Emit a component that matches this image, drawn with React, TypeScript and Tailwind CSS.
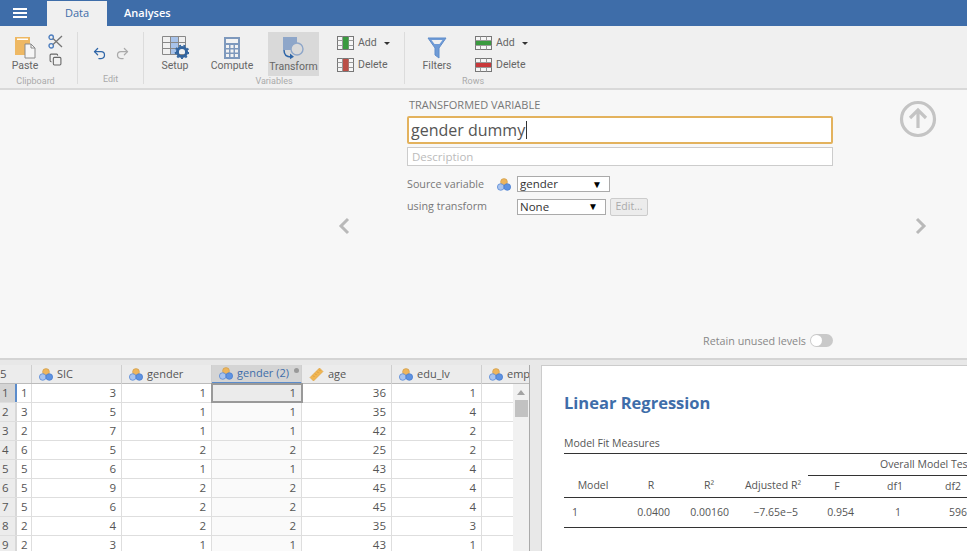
import { Undo2, Redo2, Copy } from 'lucide-react';

const rows = [
  [1, 3, 1, 1, 36, 1],
  [3, 5, 1, 1, 35, 4],
  [2, 7, 1, 1, 42, 2],
  [6, 5, 2, 2, 25, 2],
  [5, 6, 1, 1, 43, 4],
  [5, 9, 2, 2, 45, 4],
  [5, 6, 2, 2, 45, 4],
  [2, 4, 2, 2, 35, 3],
  [2, 3, 1, 1, 43, 1],
];

function VarIcon() {
  return (
    <svg width="14" height="13" viewBox="0 0 14 13" className="shrink-0">
      <circle cx="7" cy="4" r="3.4" fill="#eeb55c" stroke="#c99a4a" strokeWidth="0.6" />
      <circle cx="3.7" cy="9" r="3.3" fill="#a9c4ee" stroke="#5b8ad6" strokeWidth="0.8" />
      <circle cx="10.3" cy="9" r="3.3" fill="#5f93e2" stroke="#4a7fd0" strokeWidth="0.8" />
    </svg>
  );
}

function RulerIcon() {
  return (
    <svg width="15" height="15" viewBox="0 0 15 15" className="shrink-0">
      <path d="M1 10.5 10.5 1 14 4.5 4.5 14Z" fill="#f0b552" stroke="#dc9f3c" strokeWidth="0.6" />
      <path d="M4 8.5l1.5 1.5M6 6.5l1.5 1.5M8 4.5l1.5 1.5M10 2.5l1.5 1.5" stroke="#cf9433" strokeWidth="0.7" />
    </svg>
  );
}

function PasteIcon() {
  return (
    <svg width="23" height="23" viewBox="0 0 23 23">
      <rect x="1" y="1" width="15" height="18" fill="#eeb863" />
      <rect x="3" y="2.5" width="11" height="1.5" fill="#fff" />
      <path d="M11 8h6l4 4v10H11Z" fill="#f6f6f6" stroke="#8a8a8a" strokeWidth="1" />
      <path d="M17 8v4h4" fill="none" stroke="#8a8a8a" strokeWidth="1" />
    </svg>
  );
}

function ScissorsIcon() {
  return (
    <svg width="15" height="15" viewBox="0 0 15 15">
      <circle cx="3.2" cy="3.2" r="2.2" fill="none" stroke="#4f7fbf" strokeWidth="1.4" />
      <circle cx="3.2" cy="11.8" r="2.2" fill="none" stroke="#4f7fbf" strokeWidth="1.4" />
      <path d="M5 4.5 14 13M5 10.5 14 2" stroke="#777" strokeWidth="1.3" />
    </svg>
  );
}

function SetupIcon() {
  return (
    <svg width="27" height="23" viewBox="0 0 27 23">
      <rect x="8.5" y="1" width="8" height="18" fill="#a8c3ea" />
      <path d="M.5.5h23v18H.5ZM.5 6.5h23M.5 12.5h23M8.5.5v18M16.5.5v18" fill="none" stroke="#888" strokeWidth="1" />
      <circle cx="20" cy="16" r="4.6" fill="none" stroke="#33659f" strokeWidth="3" />
      <circle cx="20" cy="16" r="6.4" fill="none" stroke="#33659f" strokeWidth="1.8" strokeDasharray="2 2.4" />
    </svg>
  );
}

function ComputeIcon() {
  return (
    <svg width="16" height="22" viewBox="0 0 16 22">
      <rect width="16" height="22" fill="#7e99bd" />
      <rect x="2" y="2" width="12" height="4" fill="#f3f3f3" />
      <path d="M2 8h3v3H2ZM6.5 8h3v3h-3ZM11 8h3v3h-3ZM2 12.5h3v3H2ZM6.5 12.5h3v3h-3ZM11 12.5h3v3h-3ZM2 17h3v3H2ZM6.5 17h3v3h-3ZM11 17h3v3h-3Z" fill="#f3f3f3" />
    </svg>
  );
}

function TransformIcon() {
  return (
    <svg width="24" height="24" viewBox="0 0 24 24">
      <rect x="1" y="1" width="14" height="13" fill="#8ea6c9" />
      <circle cx="15" cy="13" r="6" fill="#d9d9d9" stroke="#8ea6c9" strokeWidth="1.4" />
      <path d="M2 14c0 5 3 7 7 7" fill="none" stroke="#2f66a8" strokeWidth="1.5" />
      <path d="M8 17.5l4 3.2-4 2.6Z" fill="#2f66a8" />
    </svg>
  );
}

function GridIcon({ color, kind }: { color: string; kind: 'col' | 'row' }) {
  return (
    <svg width="17" height="14" viewBox="0 0 17 14" className="shrink-0">
      <rect x="0.5" y="0.5" width="16" height="13" fill="#f6f6f6" stroke="#777" />
      <path d="M.5 4.5h16M.5 9.5h16M5.5.5v13M11.5.5v13" stroke="#999" strokeWidth="1" />
      {kind === 'col' ? <rect x="6" y="1" width="5.5" height="12" fill={color} /> : <rect x="1" y="5" width="15" height="4" fill={color} />}
    </svg>
  );
}

function FilterIcon() {
  return (
    <svg width="20" height="22" viewBox="0 0 20 22">
      <path d="M1 1h18l-7 10v10l-4-3v-7Z" fill="#6f9bd6" stroke="#5f8dcb" strokeWidth="1" />
      <path d="M4.5 3h11l-3 4h-5Z" fill="#f0f0f0" />
    </svg>
  );
}

function BigButton({ label, icon, active }: { label: string; icon: React.ReactNode; active?: boolean }) {
  return (
    <div className={`flex h-[44px] flex-col items-center justify-between pt-1 pb-[4px] ${active ? 'bg-[#d9d9d9]' : ''}`}>
      <div className="flex h-[24px] items-center justify-center">{icon}</div>
      <span className="text-[10.5px] leading-[13px] text-[#666]">{label}</span>
    </div>
  );
}

function SmallPair({ kind }: { kind: 'col' | 'row' }) {
  return (
    <div className="flex flex-col gap-[8px] pt-[4px] text-[10.5px] leading-[14px] text-[#666]">
      <div className="flex items-center gap-[4px]">
        <GridIcon color="#3a9a3f" kind={kind} />
        <span>Add</span>
        <span className="ml-[3px] border-x-[3px] border-t-[3px] border-x-transparent border-t-[#333]" />
      </div>
      <div className="flex items-center gap-[4px]">
        <GridIcon color={kind === 'col' ? '#bb4f47' : '#c8383a'} kind={kind} />
        <span>Delete</span>
      </div>
    </div>
  );
}

function GroupLabel({ children, className = '' }: { children: React.ReactNode; className?: string }) {
  return <div className={`text-center text-[9px] leading-[10px] text-[#aaa] ${className}`}>{children}</div>;
}

function Ribbon() {
  return (
    <div className="flex h-[64px] shrink-0 border-b-2 border-[#d9d9d9] bg-[#f0f0f0] pt-[6px] font-['Roboto',sans-serif]">
      <div className="flex h-[52px] w-[78px] flex-col justify-between border-r border-[#dcdcdc]">
        <div className="flex">
          <div className="ml-[8px] w-[34px]">
            <BigButton label="Paste" icon={<PasteIcon />} />
          </div>
          <div className="ml-[6px] flex flex-col gap-[4px] pt-[2px]">
            <ScissorsIcon />
            <Copy size={13} color="#666" className="ml-px" />
          </div>
        </div>
        <GroupLabel className="pr-[6px]">Clipboard</GroupLabel>
      </div>

      <div className="flex h-[52px] w-[66px] flex-col justify-between border-r border-[#dcdcdc]">
        <div className="flex justify-center gap-[8px] pt-[14px]">
          <Undo2 size={15} color="#2f66a8" />
          <Redo2 size={15} color="#aaa" />
        </div>
        <GroupLabel>Edit</GroupLabel>
      </div>

      <div className="flex h-[52px] w-[261px] flex-col justify-between border-r border-[#dcdcdc]">
        <div className="flex">
          <div className="ml-[8px] w-[46px]">
            <BigButton label="Setup" icon={<SetupIcon />} />
          </div>
          <div className="ml-[6px] w-[56px]">
            <BigButton label="Compute" icon={<ComputeIcon />} />
          </div>
          <div className="ml-[8px] w-[51px]">
            <BigButton label="Transform" icon={<TransformIcon />} active />
          </div>
          <div className="ml-[18px]">
            <SmallPair kind="col" />
          </div>
        </div>
        <GroupLabel>Variables</GroupLabel>
      </div>

      <div className="flex h-[52px] w-[136px] flex-col justify-between">
        <div className="flex">
          <div className="ml-[12px] w-[40px]">
            <BigButton label="Filters" icon={<FilterIcon />} />
          </div>
          <div className="ml-[18px]">
            <SmallPair kind="row" />
          </div>
        </div>
        <GroupLabel>Rows</GroupLabel>
      </div>
    </div>
  );
}

function Chevron({ dir }: { dir: 'left' | 'right' }) {
  return (
    <svg width="12" height="18" viewBox="0 0 12 18">
      <path d={dir === 'left' ? 'M10 2 3 9l7 7' : 'M2 2l7 7-7 7'} fill="none" stroke="#b9b9b9" strokeWidth="3" />
    </svg>
  );
}

function SelectBox({ value, width }: { value: string; width: string }) {
  return (
    <div className={`flex h-[16px] items-center justify-between border border-[#aaa] bg-white pl-[2px] pr-[7px] text-[11.5px] text-[#333] ${width}`}>
      <span>{value}</span>
      <span className="text-[10px] text-black">▼</span>
    </div>
  );
}

function TransformEditor() {
  return (
    <div className="grid h-[270px] shrink-0 grid-cols-[407px_426px_1fr] border-b-2 border-[#d4d4d4] bg-[#f7f7f7]">
      <div className="flex items-start justify-end pr-[57px] pt-[127px]">
        <Chevron dir="left" />
      </div>

      <div className="flex flex-col pt-[8px]">
        <div className="pl-[2px] text-[11px] leading-[14px] text-[#777]">TRANSFORMED VARIABLE</div>
        <div className="mt-[4px] flex h-[28px] items-center rounded-[2px] border-2 border-[#e3b25d] bg-white pl-[2px] text-[16px] text-[#555]">
          gender dummy
          <span className="ml-px h-[18px] w-px bg-[#333]" />
        </div>
        <div className="mt-[3px] flex h-[19px] items-center border border-[#ccc] bg-white pl-[4px] text-[11.5px] text-[#bbb]">Description</div>
        <div className="mt-[10px] flex h-[16px] items-center text-[10.75px] text-[#777]">
          <span className="w-[90px]">Source variable</span>
          <VarIcon />
          <span className="w-[6px]" />
          <SelectBox value="gender" width="w-[93px]" />
        </div>
        <div className="mt-[6px] flex h-[17px] items-center text-[10.75px] text-[#777]">
          <span className="w-[110px]">using transform</span>
          <SelectBox value="None" width="w-[89px]" />
          <div className="ml-[4px] flex h-[18px] w-[38px] items-center justify-center rounded-[2px] border border-[#ccc] bg-[#ececec] text-[10.5px] text-[#aaa]">Edit...</div>
        </div>
        <div className="mt-auto mb-[9px] flex items-center justify-end gap-[4px] text-[10.75px] text-[#888]">
          <span>Retain unused levels</span>
          <div className="flex h-[13px] w-[23px] items-center rounded-full bg-[#c9c9c9] pl-px">
            <div className="h-[11px] w-[11px] rounded-full bg-white" />
          </div>
        </div>
      </div>

      <div className="flex flex-col pl-[66px] pt-[10px]">
        <svg width="38" height="38" viewBox="0 0 38 38">
          <circle cx="19" cy="19" r="16.5" fill="none" stroke="#c4c4c4" strokeWidth="3.2" />
          <path d="M19 28V10M11 18l8-8 8 8" fill="none" stroke="#c4c4c4" strokeWidth="3.2" />
        </svg>
        <div className="ml-[16px] mt-[79px]">
          <Chevron dir="right" />
        </div>
      </div>
    </div>
  );
}

function HeaderCell({ label, active, ruler, width = 'w-[90px]' }: { label: string; active?: boolean; ruler?: boolean; width?: string }) {
  return (
    <div className={`flex h-[19px] shrink-0 items-center gap-[4px] border-r border-[#cfcfcf] pl-[7px] text-[11px] ${width} ${active ? 'border-b-2 border-b-[#5b8ccb] bg-[#d4d4d4] text-[#3e6da9]' : 'text-[#555]'}`}>
      {ruler ? <RulerIcon /> : <VarIcon />}
      <span className="whitespace-nowrap">{label}</span>
      {active && <span className="mb-[7px] ml-[1px] h-[5px] w-[5px] rounded-full bg-[#999]" />}
    </div>
  );
}

function DataGrid() {
  return (
    <div className="flex w-[530px] shrink-0 flex-col overflow-hidden border-r border-[#aaa] bg-white">
      <div className="flex h-[19px] shrink-0 border-b border-[#bbb] bg-[#ececec]">
        <div className="w-[32px] shrink-0 border-r border-[#cfcfcf] text-[11.5px] leading-[18px] text-[#555]">5</div>
        <HeaderCell label="SIC" />
        <HeaderCell label="gender" />
        <HeaderCell label="gender (2)" active />
        <HeaderCell label="age" ruler />
        <HeaderCell label="edu_lv" />
        <HeaderCell label="emp" width="w-[47px] border-r-0" />
      </div>
      <div className="flex min-h-0 flex-1">
        <div className="w-[513px] shrink-0">
          {rows.map((r, i) => (
            <div key={i} className="flex h-[19px] border-b border-[#dedede] text-[11.5px] leading-[18px] text-[#555]">
              <div className={`w-[17px] shrink-0 border-r-2 pl-[2px] ${i === 0 ? 'border-r-[#5b8ccb] bg-[#d4d4d4]' : 'border-r-[#d8d8d8] bg-[#ececec]'}`}>{i + 1}</div>
              <div className="w-[15px] shrink-0 border-r border-[#dedede] pl-[4px]">{r[0]}</div>
              {r.slice(1).map((v, j) => (
                <div
                  key={j}
                  className={`w-[90px] shrink-0 border-r border-[#dedede] pr-[5px] text-right ${j === 2 ? (i === 0 ? 'bg-[#ebebeb] outline-2 -outline-offset-1 outline-[#999]' : 'bg-[#fafafa]') : ''}`}
                >
                  {v}
                </div>
              ))}
              <div className="flex-1" />
            </div>
          ))}
        </div>
        <div className="flex w-[16px] shrink-0 flex-col items-center bg-[#f1f1f1] pt-[6px]">
          <span className="border-x-[4px] border-b-[5px] border-x-transparent border-b-[#a3a3a3]" />
          <div className="mt-[5px] h-[17px] w-[13px] bg-[#c2c2c2]" />
        </div>
      </div>
    </div>
  );
}

function Results() {
  return (
    <div className="ml-[11px] min-w-0 flex-1 overflow-hidden border-l border-t border-[#ccc] bg-white pl-[22px] pt-[25px] text-[10.5px] text-[#555]">
      <div className="text-[16.5px] font-bold leading-[24px] text-[#3e6da9]">Linear Regression</div>
      <div className="mt-[21px] leading-[14px]">Model Fit Measures</div>
      <div className="mt-[3px] w-[430px] border-y border-[#333]">
        <div className="flex h-[21px] items-center pl-[316px]">
          <div className="whitespace-nowrap">Overall Model Test</div>
        </div>
        <div className="grid h-[23px] grid-cols-[58px_58px_58px_70px_58px_58px_70px] items-center border-b border-[#333] text-center">
          <span>Model</span>
          <span>R</span>
          <span>R²</span>
          <span className="whitespace-nowrap">Adjusted R²</span>
          <span className="self-stretch border-t border-[#333] leading-[20px]">F</span>
          <span className="self-stretch border-t border-[#333] leading-[20px]">df1</span>
          <span className="self-stretch border-t border-[#333] pr-[12px] leading-[20px]">df2</span>
        </div>
        <div className="grid h-[29px] grid-cols-[58px_58px_58px_70px_58px_58px_70px] items-center text-right">
          <span className="pl-[8px] text-left">1</span>
          <span className="pr-[10px]">0.0400</span>
          <span className="pr-[9px]">0.00160</span>
          <span className="pr-[10px] whitespace-nowrap">−7.65e−5</span>
          <span className="pr-[12px]">0.954</span>
          <span className="pr-[23px]">1</span>
          <span className="pr-[27px]">596</span>
        </div>
      </div>
    </div>
  );
}

export default function App() {
  return (
    <div className="flex h-[551px] w-[967px] flex-col overflow-hidden bg-[#e8e8e8] font-['Open_Sans',sans-serif]">
      <div className="flex h-[26px] shrink-0 items-end bg-[#3e6da9]">
        <div className="mb-[8px] ml-[13px] flex w-[14px] flex-col gap-[2px]">
          <span className="h-[2px] bg-white" />
          <span className="h-[2px] bg-white" />
          <span className="h-[2px] bg-white" />
        </div>
        <div className="ml-[20px] flex h-[25px] w-[60px] items-center justify-center bg-[#f0f0f0] text-[11px] text-[#3e6da9]">Data</div>
        <div className="ml-[17px] flex h-[25px] items-center text-[11px] font-semibold text-white">Analyses</div>
      </div>
      <Ribbon />
      <TransformEditor />
      <div className="flex min-h-0 flex-1 pt-[5px]">
        <DataGrid />
        <Results />
      </div>
    </div>
  );
}
